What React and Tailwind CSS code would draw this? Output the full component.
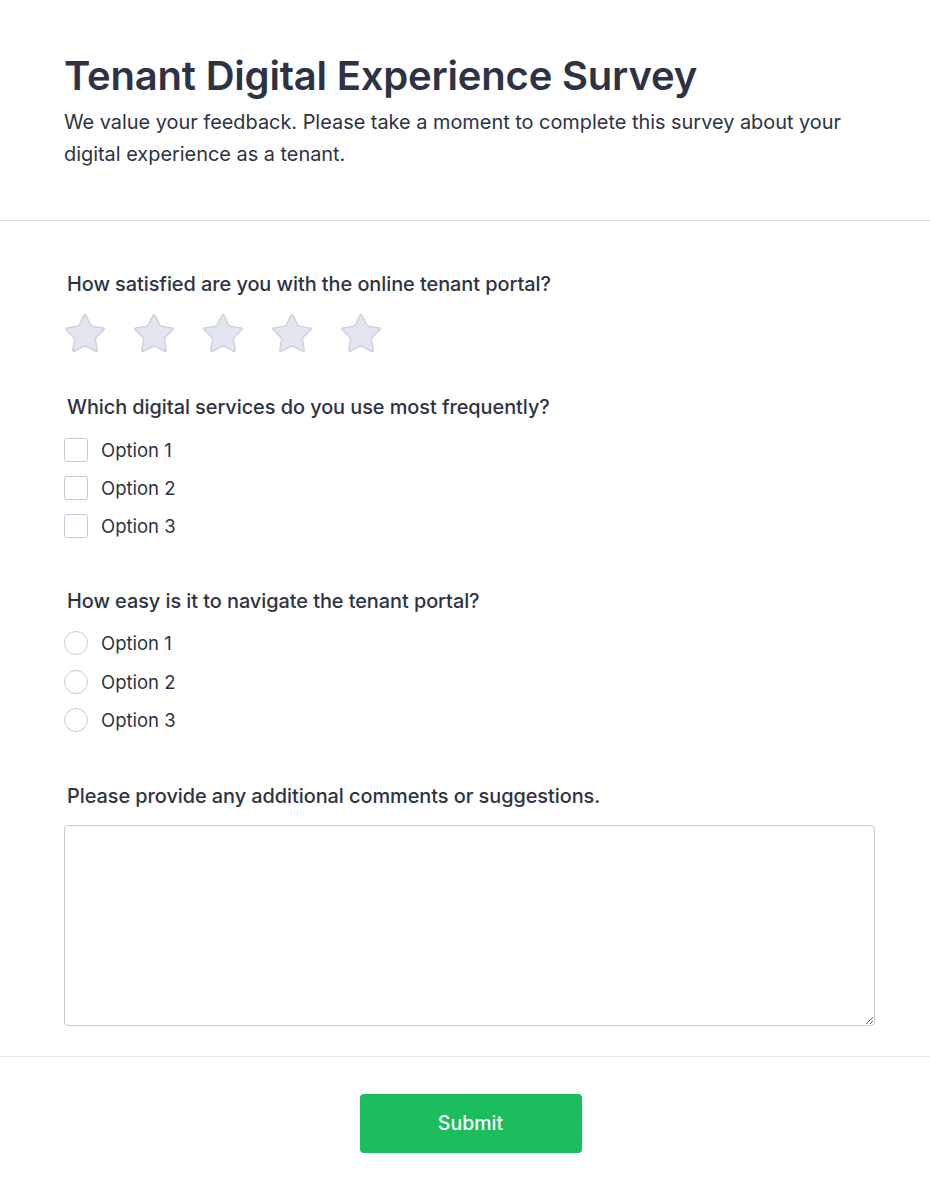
import { Star } from "lucide-react";

const options = ["Option 1", "Option 2", "Option 3"];

export default function App() {
  return (
    <div className="min-h-screen bg-white text-[#2d3344]" style={{ fontFamily: "Inter, 'Noto Sans', sans-serif" }}>
      {/* Header */}
      <div className="pl-16 pr-[55px] pt-[50px] pb-[50px] border-b border-[#dcdde8]">
        <h1 className="text-[40px] leading-[52px] font-semibold tracking-[-0.2px]">
          Tenant Digital Experience Survey
        </h1>
        <p className="mt-[4px] text-[19.9px] leading-8">
          We value your feedback. Please take a moment to complete this survey about your digital experience as a tenant.
        </p>
      </div>

      {/* Questions */}
      <div className="pl-16 pr-[55px] pt-[49px] pb-[30px] border-b border-[#e6e8f0]">
        <div>
          <label className="block px-[3px] text-[19.9px] leading-7 font-medium tracking-[-0.05px] mb-[13px]">
            How satisfied are you with the online tenant portal?
          </label>
          <div className="flex gap-[23px] -ml-[2px]">
            {[1, 2, 3, 4, 5].map((n) => (
              <Star key={n} size={46} strokeWidth={0.8} fill="#e3e6f0" color="#cdd2df" />
            ))}
          </div>
        </div>

        <div className="mt-[36px]">
          <label className="block px-[3px] text-[19.9px] leading-7 font-medium tracking-[-0.05px] mb-[17px]">
            Which digital services do you use most frequently?
          </label>
          <div className="flex flex-col gap-[14px]">
            {options.map((o) => (
              <div key={o} className="flex items-center gap-[13px]">
                <span className="w-6 h-6 rounded-[3px] border border-[#c6cad7] bg-white" />
                <span className="text-[18.5px] leading-6">{o}</span>
              </div>
            ))}
          </div>
        </div>

        <div className="mt-[49px]">
          <label className="block px-[3px] text-[19.9px] leading-7 font-medium tracking-[-0.05px] mb-[16px]">
            How easy is it to navigate the tenant portal?
          </label>
          <div className="flex flex-col gap-[14.5px]">
            {options.map((o) => (
              <div key={o} className="flex items-center gap-[13px]">
                <span className="w-6 h-6 rounded-full border border-[#c6cad7] bg-white" />
                <span className="text-[18.5px] leading-6">{o}</span>
              </div>
            ))}
          </div>
        </div>

        <div className="mt-[50px]">
          <label className="block px-[3px] text-[19.9px] leading-7 font-medium tracking-[-0.05px] mb-[15px]">
            Please provide any additional comments or suggestions.
          </label>
          <textarea className="block w-full h-[201px] rounded border border-[#c6cad7] outline-none resize-y" />
        </div>
      </div>

      {/* Footer */}
      <div className="flex justify-center pl-[66px] pr-[55px] pt-[37px] pb-[50px]">
        <button className="w-[222px] h-[59px] rounded bg-[#1bbd5d] text-white text-[19.5px] font-medium">
          Submit
        </button>
      </div>
    </div>
  );
}
